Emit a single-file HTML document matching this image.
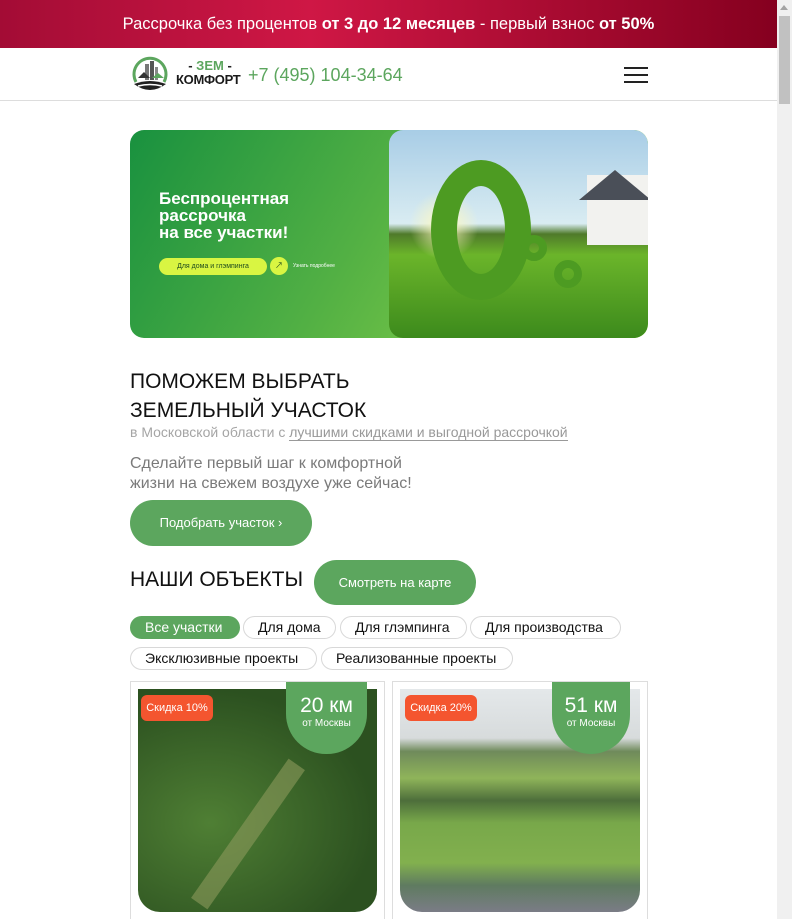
<!DOCTYPE html>
<html><head><meta charset="utf-8"><style>
*{margin:0;padding:0;box-sizing:border-box}
html,body{width:792px;height:919px;overflow:hidden;background:#fff;font-family:"Liberation Sans","Noto Sans CJK SC",sans-serif}
.page{position:absolute;left:0;top:0;width:777px;height:919px;overflow:hidden}
.sb{position:absolute;left:777px;top:0;width:15px;height:919px;background:#f0f0f0}
.sb .th{position:absolute;left:2px;top:16px;width:11px;height:88px;background:#c1c1c1}
.sb .ar{position:absolute;left:3px;top:5px;width:0;height:0;border-left:4px solid transparent;border-right:4px solid transparent;border-bottom:5px solid #a3a3a3}
.top{height:48px;background:linear-gradient(90deg,#a30c35,#cf1745 40%,#85001f);color:#fff;font-size:16.5px;text-align:center;line-height:48px}
.top b{font-weight:bold}
.hdr{position:relative;height:53px;border-bottom:1px solid #ddd}
.abs{position:absolute}
.tag{position:absolute;height:23px;border-radius:12px;border:1px solid #d8d8d8;font-size:14px;line-height:21px;padding:0 14px;color:#111;top:0}
.pill{position:absolute;background:#5ca65e;color:#fff;border-radius:24px;text-align:center;font-size:13px}
</style></head><body>
<div class="page">
<div class="top">Рассрочка без процентов <b>от 3 до 12 месяцев</b> - первый взнос <b>от 50%</b></div>
<div class="hdr">
 <svg class="abs" style="left:130px;top:8px" width="40" height="40" viewBox="0 0 40 40">
  <path d="M6 26 A16 16 0 1 1 34 26" fill="none" stroke="#5ca65e" stroke-width="3"/>
  <rect x="15" y="8" width="4" height="16" fill="#777"/><rect x="20" y="5" width="4" height="19" fill="#555"/><rect x="25" y="11" width="3" height="13" fill="#888"/>
  <path d="M8 22 L14 16 L20 22Z" fill="#333"/><path d="M22 22 L28 17 L34 22Z" fill="#5ca65e"/>
  <path d="M4 28 Q20 22 36 28 Q20 40 4 28Z" fill="#222"/><path d="M8 30 Q20 27 32 30" stroke="#fff" stroke-width="1.5" fill="none"/>
 </svg>
 <div class="abs" style="left:177px;top:10px;font-size:13px;font-weight:bold;color:#5ca65e;width:66px;text-align:center"><span style="color:#222">- </span>ЗЕМ<span style="color:#222"> -</span></div>
 <div class="abs" style="left:176px;top:24px;font-size:13px;font-weight:bold;color:#1a1a1a;letter-spacing:-0.3px">КОМФОРТ</div>
 <div class="abs" style="left:248px;top:17px;font-size:18px;color:#5ca65e">+7 (495) 104-34-64</div>
 <div class="abs" style="left:624px;top:19px;width:24px;height:2px;background:#222"></div>
 <div class="abs" style="left:624px;top:26px;width:24px;height:2px;background:#222"></div>
 <div class="abs" style="left:624px;top:33px;width:24px;height:2px;background:#222"></div>
</div>
<div class="abs" style="left:130px;top:130px;width:518px;height:208px;border-radius:14px;overflow:hidden;background:linear-gradient(120deg,#19913f,#52b044 45%,#9edd4a)">
 <div class="abs" style="left:259px;top:0;width:259px;height:208px;border-radius:14px;overflow:hidden;background:linear-gradient(180deg,#a8cde6 0%,#d9ecf2 45%,#4f7a2a 50%,#6bb52a 60%,#3c8a1c 100%)">
  <div class="abs" style="left:20px;top:60px;width:70px;height:70px;border-radius:50%;background:radial-gradient(#fff9c0,rgba(255,240,120,0) 70%)"></div>
  <div class="abs" style="left:42px;top:30px;width:100px;height:140px;border-radius:50%;border:26px solid #4d9b22"></div>
  <div class="abs" style="left:132px;top:105px;width:26px;height:26px;border-radius:50%;border:8px solid #4d9b22"></div>
  <div class="abs" style="left:165px;top:130px;width:28px;height:28px;border-radius:50%;border:8px solid #4d9b22"></div>
  <div class="abs" style="left:198px;top:45px;width:61px;height:70px;background:#f2f2ef"></div>
  <div class="abs" style="left:190px;top:40px;width:0;height:0;border-left:36px solid transparent;border-right:36px solid transparent;border-bottom:30px solid #4a4f58"></div>
 </div>
 <div class="abs" style="left:29px;top:60px;color:#fff;font-weight:bold;font-size:17px;line-height:17px">Беспроцентная<br>рассрочка<br>на все участки!</div>
 <div class="abs" style="left:29px;top:128px;width:108px;height:17px;border-radius:9px;background:#d9f542;font-size:7px;line-height:17px;text-align:center;color:#1d4a1d">Для дома и глэмпинга</div>
 <div class="abs" style="left:140px;top:127px;width:18px;height:18px;border-radius:50%;background:#d9f542;font-size:8px;line-height:18px;text-align:center;color:#1d4a1d">↗</div>
 <div class="abs" style="left:163px;top:133px;font-size:5px;color:#fff">Узнать подробнее</div>
</div>
<div class="abs" style="left:130px;top:367px;font-size:21px;line-height:29px;color:#111">ПОМОЖЕМ ВЫБРАТЬ<br>ЗЕМЕЛЬНЫЙ УЧАСТОК</div>
<div class="abs" style="left:130px;top:424px;font-size:14px;color:#a5a5a5">в Московской области с <span style="border-bottom:1px solid #999;color:#999">лучшими скидками и выгодной рассрочкой</span></div>
<div class="abs" style="left:130px;top:454px;font-size:16px;line-height:20px;color:#7a7a7a">Сделайте первый шаг к комфортной<br>жизни на свежем воздухе уже сейчас!</div>
<div class="pill" style="left:130px;top:500px;width:182px;height:46px;line-height:46px">Подобрать участок ›</div>
<div class="abs" style="left:130px;top:568px;font-size:21px;color:#111">НАШИ ОБЪЕКТЫ</div>
<div class="pill" style="left:314px;top:560px;width:162px;height:45px;line-height:45px">Смотреть на карте</div>
<div class="abs" style="left:0;top:616px;width:777px;height:23px">
 <div class="tag" style="left:130px;width:110px;background:#5ca65e;border-color:#5ca65e;color:#fff">Все участки</div>
 <div class="tag" style="left:243px;width:93px">Для дома</div>
 <div class="tag" style="left:340px;width:127px">Для глэмпинга</div>
 <div class="tag" style="left:470px;width:151px">Для производства</div>
</div>
<div class="abs" style="left:0;top:647px;width:777px;height:23px">
 <div class="tag" style="left:130px;width:187px">Эксклюзивные проекты</div>
 <div class="tag" style="left:321px;width:192px">Реализованные проекты</div>
</div>
<div class="abs" style="left:130px;top:681px;width:255px;height:250px;border:1px solid #ddd"></div>
<div class="abs" style="left:392px;top:681px;width:256px;height:250px;border:1px solid #ddd"></div>
<div class="abs" style="left:138px;top:689px;width:239px;height:223px;border-radius:0 0 22px 22px;overflow:hidden;background:radial-gradient(ellipse at 30% 60%,#4f7f34,#2c5120 70%),#345f26">
 <div class="abs" style="left:100px;top:60px;width:20px;height:170px;background:#8c9a5c;transform:rotate(35deg);opacity:.6"></div>
</div>
<div class="abs" style="left:400px;top:689px;width:240px;height:223px;border-radius:0 0 22px 22px;overflow:hidden;background:linear-gradient(180deg,#e4e8ea 0%,#d7dbdc 22%,#6f8a5b 28%,#8fb45a 40%,#4d6e3b 50%,#78a84a 60%,#82b04e 78%,#5f7b60 88%,#7a7c86 100%)"></div>
<div class="abs" style="left:141px;top:695px;width:72px;height:26px;border-radius:6px;background:#f4552f;color:#fff;font-size:11px;line-height:26px;text-align:center">Скидка 10%</div>
<div class="abs" style="left:405px;top:695px;width:72px;height:26px;border-radius:6px;background:#f4552f;color:#fff;font-size:11px;line-height:26px;text-align:center">Скидка 20%</div>
<div class="abs" style="left:286px;top:682px;width:81px;height:72px;border-radius:0 0 40px 40px;background:#5ca65e;color:#fff;text-align:center"><div style="font-size:21px;margin-top:12px">20 км</div><div style="font-size:10px">от Москвы</div></div>
<div class="abs" style="left:552px;top:682px;width:78px;height:72px;border-radius:0 0 40px 40px;background:#5ca65e;color:#fff;text-align:center"><div style="font-size:21px;margin-top:12px">51 км</div><div style="font-size:10px">от Москвы</div></div>
</div>
<div class="sb"><div class="ar"></div><div class="th"></div></div>
</body></html>
